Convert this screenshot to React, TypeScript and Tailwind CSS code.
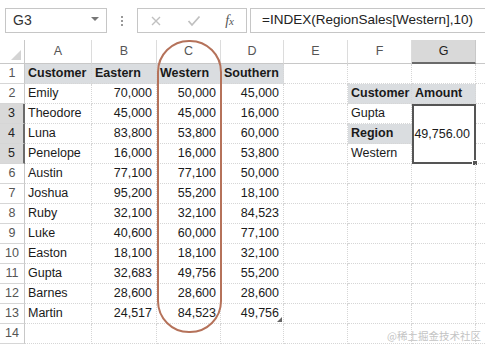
import React from 'react';

const font = { fontFamily: '"Liberation Sans", Arial, sans-serif' };

const cols = ['A', 'B', 'C', 'D', 'E', 'F', 'G'];

const sales = [
  ['Emily', '70,000', '50,000', '45,000'],
  ['Theodore', '45,000', '45,000', '16,000'],
  ['Luna', '83,800', '53,800', '60,000'],
  ['Penelope', '16,000', '16,000', '53,800'],
  ['Austin', '77,100', '77,100', '50,000'],
  ['Joshua', '95,200', '55,200', '18,100'],
  ['Ruby', '32,100', '32,100', '84,523'],
  ['Luke', '40,600', '60,000', '77,100'],
  ['Easton', '18,100', '18,100', '32,100'],
  ['Gupta', '32,683', '49,756', '55,200'],
  ['Barnes', '28,600', '28,600', '28,600'],
  ['Martin', '24,517', '84,523', '49,756'],
];

// lookup table in F2:G5 (G3:G5 merged)
const lookup: Record<number, { f: string; fBold?: boolean; g?: string }> = {
  2: { f: 'Customer', fBold: true, g: 'Amount' },
  3: { f: 'Gupta' },
  4: { f: 'Region', fBold: true },
  5: { f: 'Western' },
};

const grid = 'border-r border-b border-dotted border-[#d6d6d6]';

function RowHead({ n }: { n: number }) {
  const sel = n >= 3 && n <= 5;
  return (
    <div
      className={`flex items-center justify-center text-[12.5px] border-b border-[#d6d6d6] ${
        sel ? 'bg-[#d9d9d9] text-[#222] border-r-2 border-r-[#6a6a6a]' : 'bg-white text-[#555] border-r border-r-[#c8c8c8]'
      }`}
    >
      {n}
    </div>
  );
}

function Cell({ children, right, bold, bg }: { children?: React.ReactNode; right?: boolean; bold?: boolean; bg?: boolean }) {
  return (
    <div
      className={`relative flex items-center text-[12.5px] text-[#1a1a1a] whitespace-nowrap overflow-visible ${grid} ${
        right ? 'justify-end pr-[4px]' : 'pl-[3px]'
      } ${bold ? 'font-bold' : ''} ${bg ? 'bg-[#dadde0]' : ''}`}
    >
      {children}
    </div>
  );
}

function Toolbar() {
  return (
    <div className="h-[40px] flex items-start pt-[8px] pl-[5px] gap-0">
      <div className="w-[102px] h-[25px] border border-[#c6c6c6] flex items-center justify-between pl-[7px] pr-[7px]">
        <span className="text-[14px] text-[#333]">G3</span>
        <span className="w-0 h-0 border-l-[4px] border-r-[4px] border-t-[4px] border-l-transparent border-r-transparent border-t-[#777] mt-[-4px]" />
      </div>
      <div className="w-[30px] h-[25px] flex flex-col items-center justify-center gap-[2px]">
        <span className="w-[2px] h-[2px] bg-[#999]" />
        <span className="w-[2px] h-[2px] bg-[#999]" />
        <span className="w-[2px] h-[2px] bg-[#999]" />
      </div>
      <div className="w-[110px] h-[25px] border border-[#c6c6c6] flex items-center justify-between px-[12px]">
        <svg width="12" height="12" viewBox="0 0 12 12">
          <path d="M2 2 L10 10 M10 2 L2 10" stroke="#c0c0c0" strokeWidth="1.4" />
        </svg>
        <svg width="14" height="12" viewBox="0 0 14 12">
          <path d="M1.5 6 L5 10 L12.5 1.5" stroke="#c0c0c0" strokeWidth="1.8" fill="none" />
        </svg>
        <span className="text-[14px] italic text-[#555]" style={{ fontFamily: '"Liberation Serif", serif' }}>
          f<span className="text-[11px]">x</span>
        </span>
      </div>
      <div className="ml-[3px] flex-1 h-[25px] border border-r-0 border-[#c6c6c6] flex items-center pl-[11px]">
        <span className="text-[13.5px] text-[#222]">=INDEX(RegionSales[Western],10)</span>
      </div>
    </div>
  );
}

export default function App() {
  const rows: React.ReactNode[] = [];

  for (let r = 1; r <= 14; r++) {
    rows.push(<RowHead key={`h${r}`} n={r} />);
    if (r === 1) {
      ['Customer', 'Eastern', 'Western', 'Southern'].map((t) =>
        rows.push(
          <Cell key={`1${t}`} bold bg>
            {t}
          </Cell>
        )
      );
    } else if (r <= 13) {
      const d = sales[r - 2];
      rows.push(<Cell key={`${r}a`}>{d[0]}</Cell>);
      rows.push(<Cell key={`${r}b`} right>{d[1]}</Cell>);
      rows.push(<Cell key={`${r}c`} right>{d[2]}</Cell>);
      rows.push(
        <Cell key={`${r}d`} right>
          {d[3]}
          {r === 13 && (
            <svg className="absolute right-[1px] bottom-[1px]" width="5" height="5" viewBox="0 0 5 5">
              <path d="M5 0 L5 5 L0 5 Z" fill="#666" />
            </svg>
          )}
        </Cell>
      );
    } else {
      for (let i = 0; i < 4; i++) rows.push(<Cell key={`${r}x${i}`} />);
    }
    // column E
    rows.push(<Cell key={`${r}e`} />);
    // columns F, G
    const l = lookup[r];
    if (l) {
      rows.push(
        <Cell key={`${r}f`} bold={l.fBold} bg={l.fBold}>
          {l.f}
        </Cell>
      );
      if (r === 2) {
        rows.push(
          <Cell key={`${r}g`} bold bg>
            {l.g}
          </Cell>
        );
      } else if (r === 3) {
        rows.push(
          <div
            key="merged"
            className="row-span-3 relative border-2 border-[#555] flex items-center justify-end pr-[4px] text-[12.5px] text-[#1a1a1a] bg-white"
          >
            49,756.00
            <span className="absolute right-[-4px] bottom-[-4px] w-[6px] h-[6px] bg-[#555] border border-white" />
          </div>
        );
      }
    } else {
      rows.push(<Cell key={`${r}f`} />);
      rows.push(<Cell key={`${r}g`} />);
    }
    rows.push(<div key={`${r}z`} className="border-b border-dotted border-[#d6d6d6]" />);
  }

  return (
    <div className="w-[485px] h-[345px] bg-white overflow-hidden relative" style={font}>
      <Toolbar />
      <div className="grid grid-cols-[25px_67px_65px_64px_63px_64px_64px_64px_1fr] grid-rows-[24px_repeat(14,20px)]">
        {/* select-all corner */}
        <div className="relative border-r border-b border-[#c8c8c8]">
          <svg className="absolute right-[3px] bottom-[3px]" width="10" height="10" viewBox="0 0 10 10">
            <path d="M10 0 L10 10 L0 10 Z" fill="#d4d4d4" />
          </svg>
        </div>
        {cols.map((c) => (
          <div
            key={c}
            className={`flex items-center justify-center text-[12.5px] border-b ${
              c === 'G'
                ? 'bg-[#d9d9d9] text-[#222] border-b-2 border-b-[#6a6a6a] border-r border-r-[#c8c8c8]'
                : 'text-[#555] border-b-[#c8c8c8] border-r border-r-[#dcdcdc]'
            }`}
          >
            {c}
          </div>
        ))}
        <div className="border-b border-[#c8c8c8]" />
        {rows}
      </div>

      {/* highlight ring round column C */}
      <div className="absolute left-[157px] top-[40px] w-[65px] h-[293px] border-2 border-[#b5725a] rounded-[32px] pointer-events-none" />

      <div
        className="absolute right-[4px] bottom-[1px] text-[10.5px] text-[#c4c4c4]"
        style={{ fontFamily: '"Noto Sans CJK SC", sans-serif' }}
      >
        @稀土掘金技术社区
      </div>
    </div>
  );
}
